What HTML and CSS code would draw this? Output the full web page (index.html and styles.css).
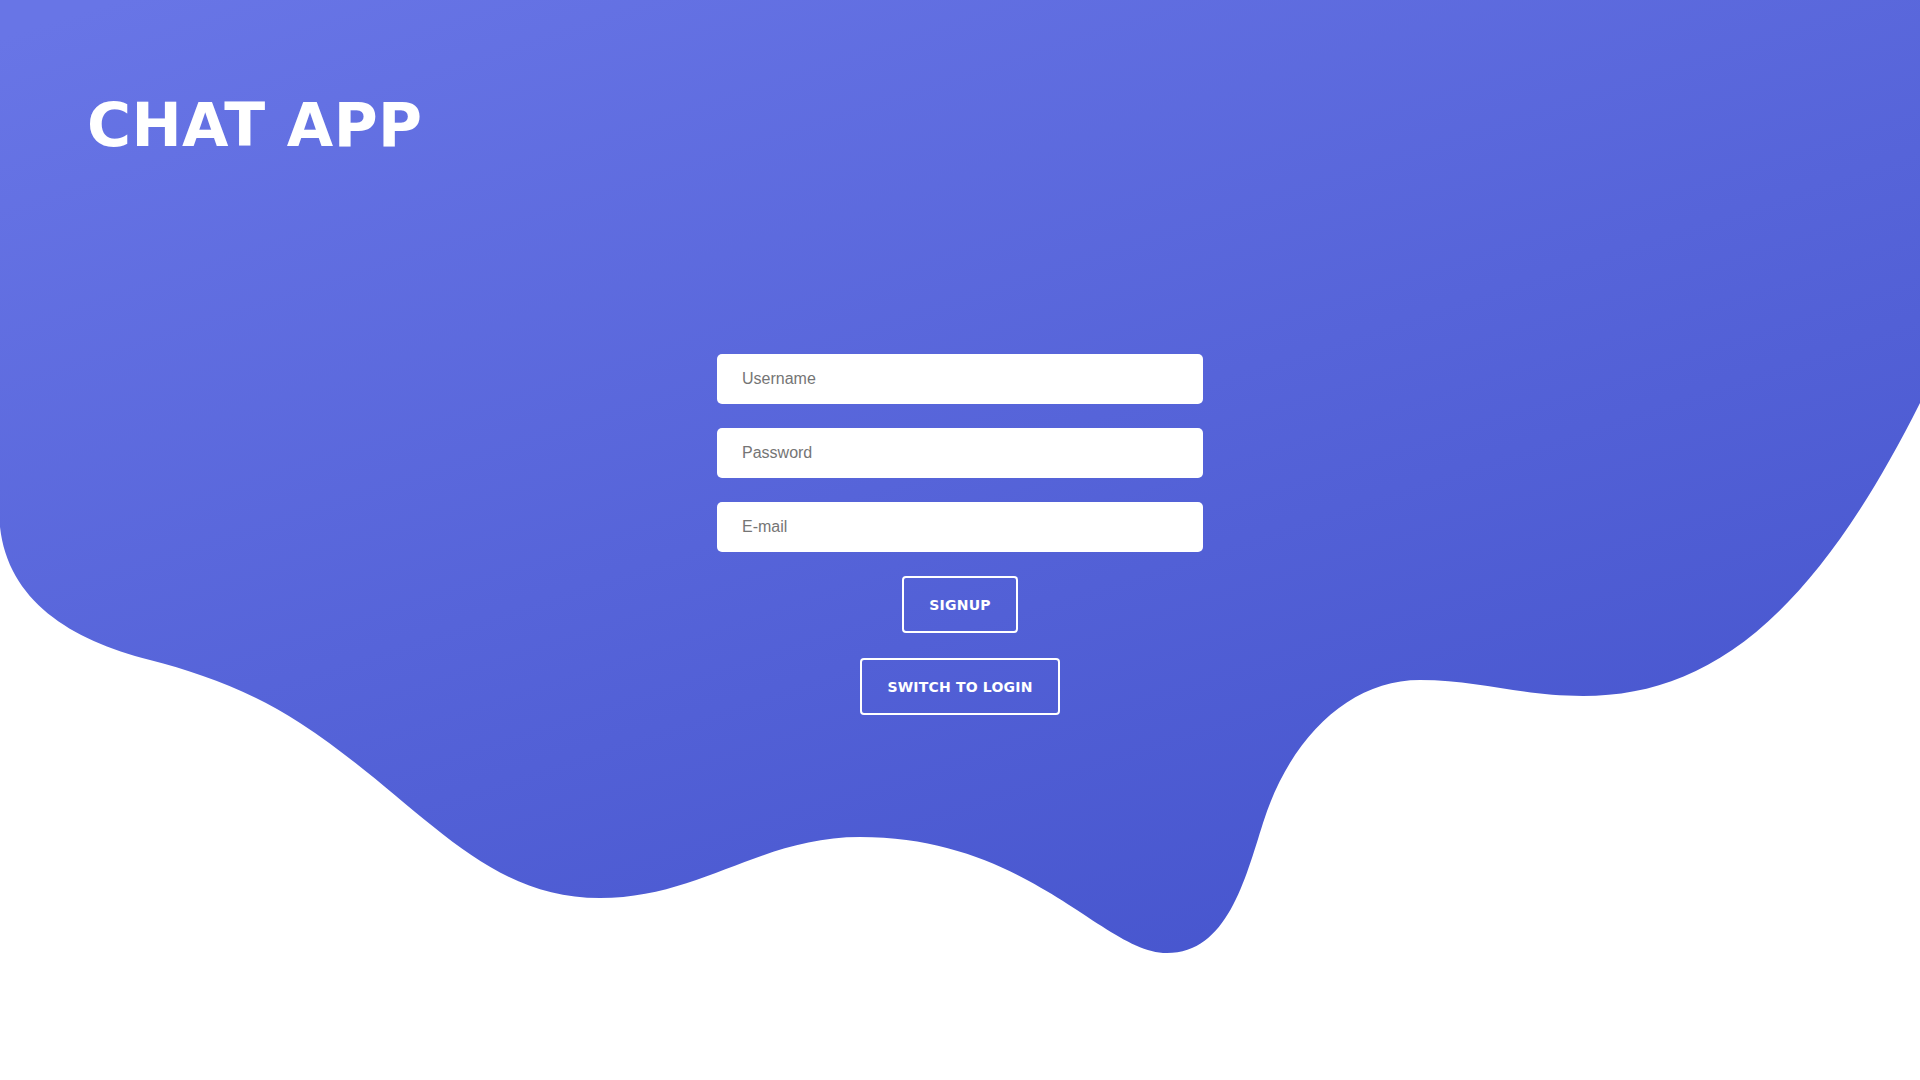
FILE: index.html
```html
<!DOCTYPE html>
<html lang="en">
<head>
<meta charset="utf-8">
<title>Chat App</title>
<link rel="stylesheet" href="styles.css">
</head>
<body>
<div class="page">
  <svg class="wave" viewBox="0 0 1920 1080" preserveAspectRatio="none" aria-hidden="true">
    <defs>
      <linearGradient id="waveGrad" gradientUnits="userSpaceOnUse" x1="700" y1="-190" x2="1180" y2="1290">
        <stop offset="0" stop-color="#6875e6"/>
        <stop offset="1" stop-color="#404fc9"/>
      </linearGradient>
    </defs>
    <path fill="url(#waveGrad)" d="M0,0 L0,527 C8,600 70,640 150,660 C200,673 250,690.5 300,723 C420,801 480,898 600,898 C700,898 760,837 860,837 C1030,837 1103,953 1167,953 C1227,953 1245,880 1263,823 C1290,737 1350,680 1420,680 C1480,680 1520,696 1583,696 C1703,696 1808,626.5 1920,403 L1920,0 Z"/>
  </svg>
  <header class="header">
    <h1 class="title">CHAT APP</h1>
  </header>
  <main class="form">
    <input class="field" type="text" placeholder="Username">
    <input class="field" type="password" placeholder="Password">
    <input class="field" type="email" placeholder="E-mail">
    <button class="btn" type="button">SIGNUP</button>
    <button class="btn btn-switch" type="button">SWITCH TO LOGIN</button>
  </main>
</div>
</body>
</html>
```
FILE: styles.css
```css
html, body {
  margin: 0;
  padding: 0;
  background: #ffffff;
}

.page {
  position: relative;
  width: 100%;
  height: 100vh;
  overflow: hidden;
}

.wave {
  position: absolute;
  top: 0;
  left: 0;
  width: 100%;
  height: 100%;
  z-index: 0;
  display: block;
}

.header {
  position: relative;
  z-index: 1;
  padding: 90px 0 0 87px;
}

.title {
  margin: 0;
  font-family: "DejaVu Sans", Verdana, sans-serif;
  font-weight: bold;
  font-size: 60px;
  letter-spacing: 0.4px;
  line-height: normal;
  color: #ffffff;
}

.form {
  position: relative;
  z-index: 1;
  display: flex;
  flex-direction: column;
  align-items: center;
  gap: 24px;
  margin-top: 194px;
}

.field {
  box-sizing: border-box;
  width: 486px;
  height: 50px;
  border: none;
  border-radius: 5px;
  background: #ffffff;
  padding: 0 25px;
  font-family: "Liberation Sans", Arial, sans-serif;
  font-size: 16px;
  color: #333333;
  outline: none;
}

.field::placeholder {
  color: #757575;
}

.btn {
  box-sizing: border-box;
  height: 57px;
  padding: 0 25px;
  border: 2px solid #ffffff;
  border-radius: 4px;
  background: transparent;
  color: #ffffff;
  font-family: "DejaVu Sans", Verdana, sans-serif;
  font-weight: bold;
  font-size: 14px;
  line-height: 16px;
  letter-spacing: 0.2px;
  cursor: pointer;
}

.btn-switch {
  margin-top: 1px;
}
```
